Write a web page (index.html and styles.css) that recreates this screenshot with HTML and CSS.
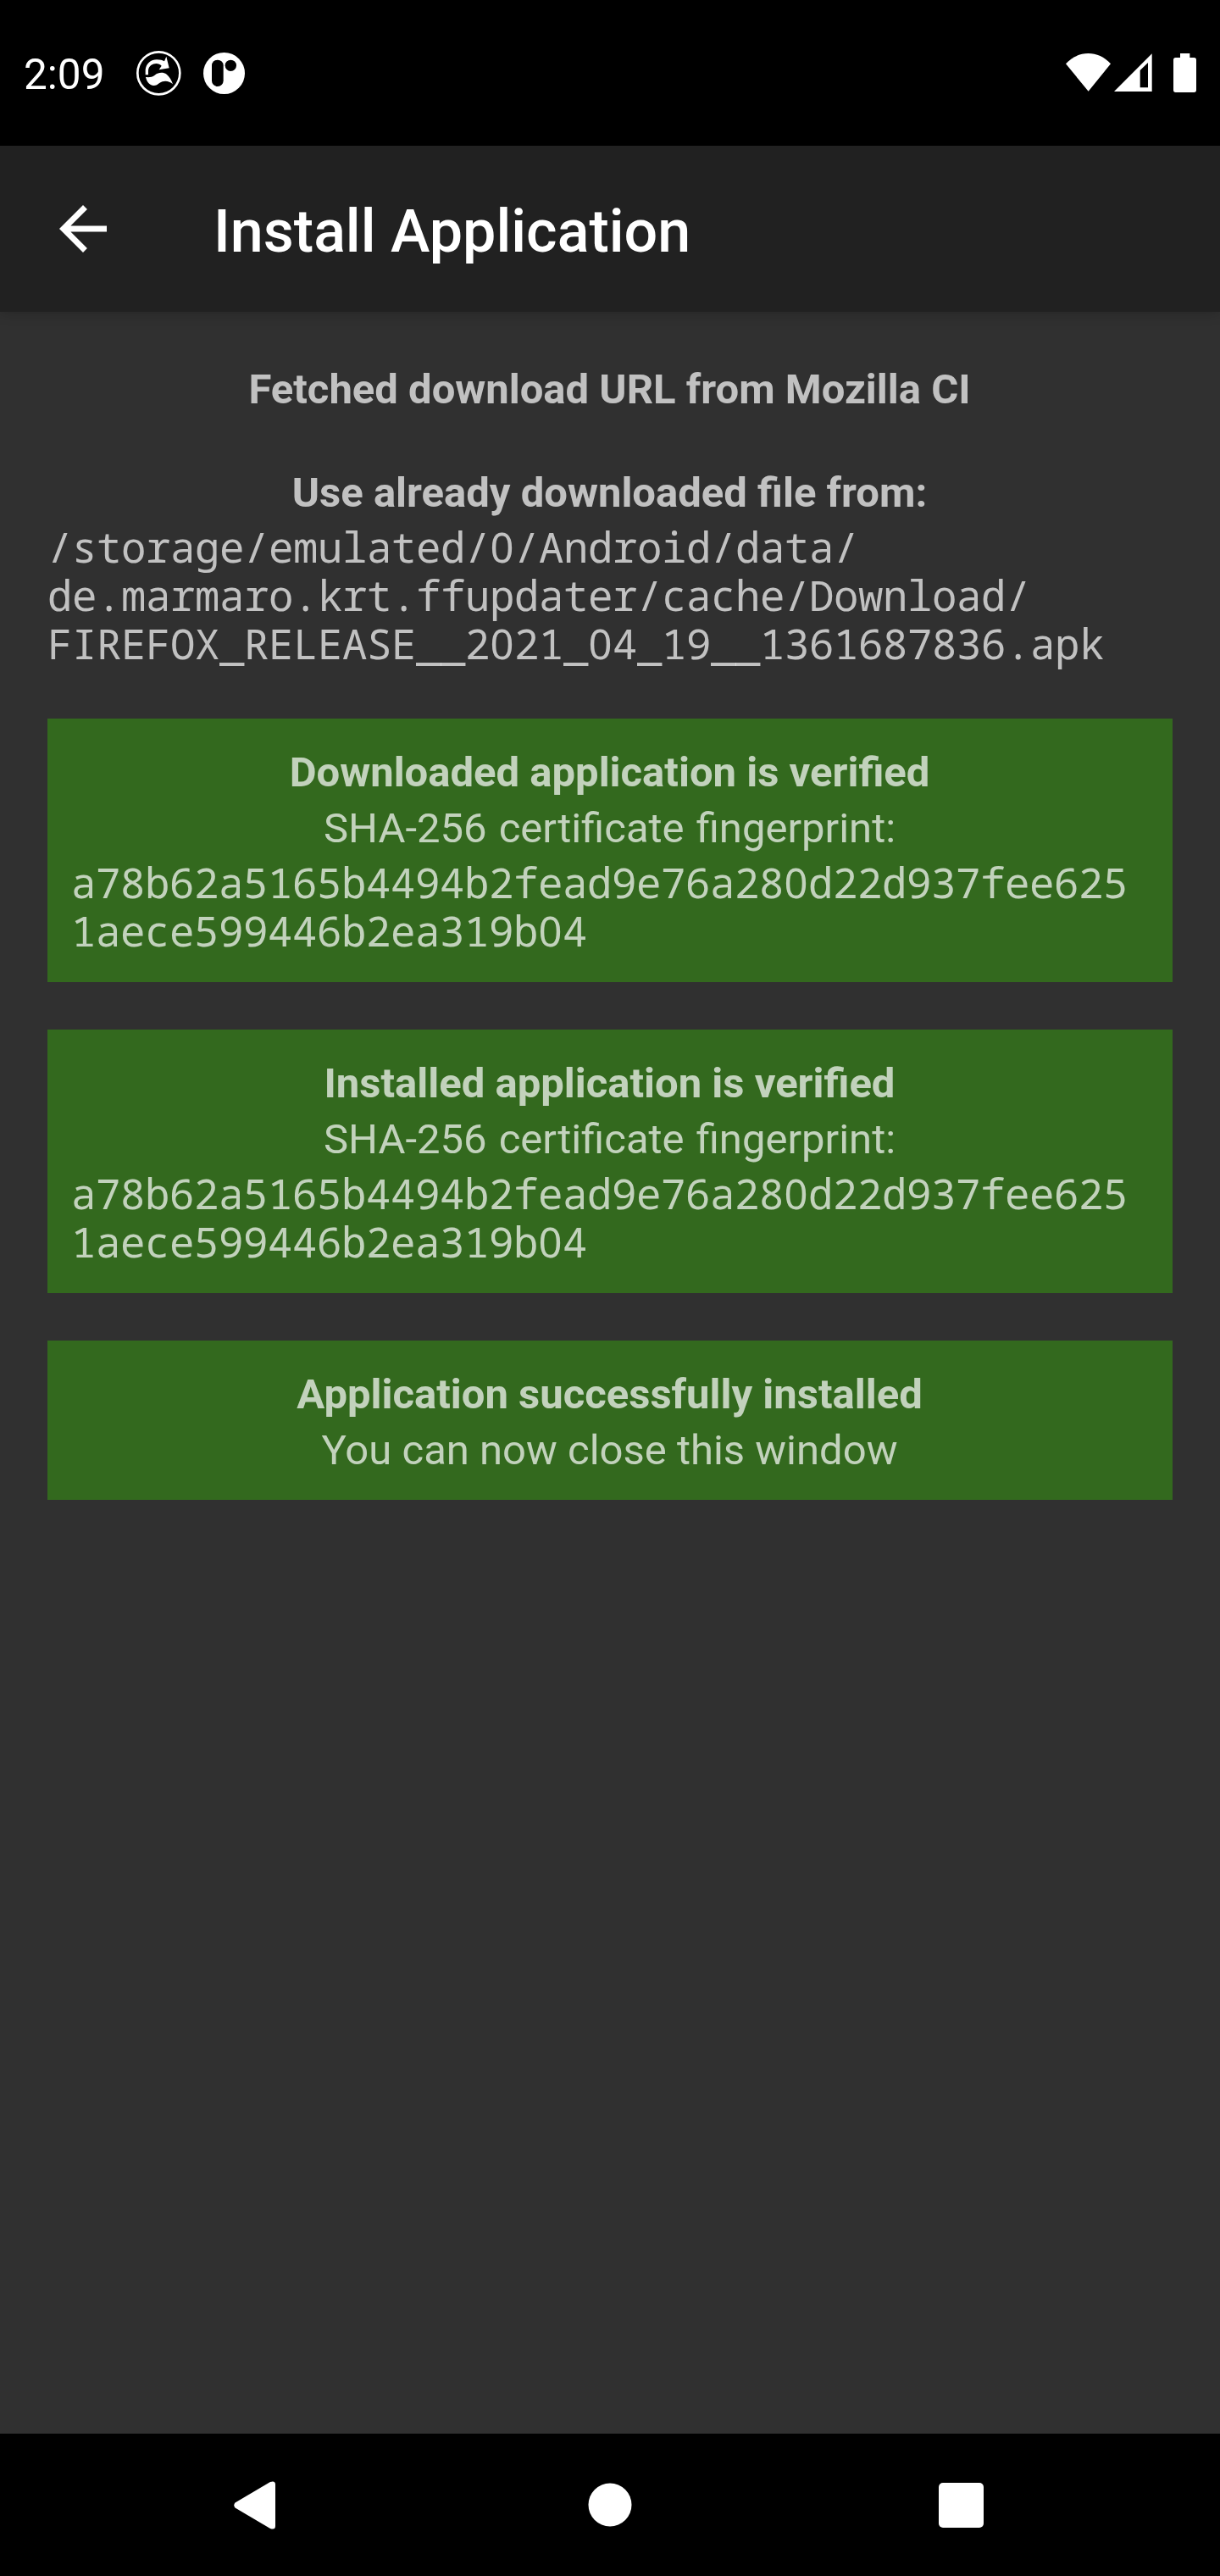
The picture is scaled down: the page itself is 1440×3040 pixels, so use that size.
FILE: index.html
```html
<!DOCTYPE html>
<html lang="en">
<head>
<meta charset="utf-8">
<title>Install Application</title>
<link rel="stylesheet" href="styles.css">
</head>
<body>
<div class="screen">
  <header class="status">
    <span class="clock">2:09</span>
    <svg class="icon-update" viewBox="480 57 162 162" width="54" height="54">
      <circle cx="562" cy="139" r="75" fill="none" stroke="#fff" stroke-width="8"/>
      <path d="M515 145V127C517 105 535 91 555 91C567 91 576 93 582 97L589 80L599 121L563 127L572 113C560 99 527 104 525 130V145Z" fill="#fff"/>
      <path d="M516 153C527 154 538 154 548 146C562 135 578 135 590 143C599 151 608 164 612 178C602 169 588 165 575 169C560 174 558 183 545 183C528 182 519 168 516 153Z" fill="#fff"/>
    </svg>
    <svg class="icon-app" viewBox="720 66 147 147" width="49" height="49">
      <circle cx="793.500" cy="139.500" r="73.500" fill="#fff"/>
      <rect x="750" y="92" width="41" height="94" rx="20"/>
      <circle cx="817" cy="112" r="20"/>
    </svg>
    <span class="spacer"></span>
    <svg class="icon-wifi" viewBox="84 69 159 135" width="53" height="45" fill="#fff">
      <path d="M84 106C128 57 199 57 243 106L164 203Z"/>
    </svg>
    <svg class="icon-signal" viewBox="256 69 135 135" width="45" height="45" fill="#fff" fill-rule="evenodd">
      <path d="M256 204L390 70V204ZM348 129V190H376V102Z"/>
    </svg>
    <svg class="icon-battery" viewBox="465 69 81 138" width="27" height="46" fill="#fff">
      <path d="M489 69H523V84H538Q546 84 546 92V199Q546 207 538 207H473Q465 207 465 199V92Q465 84 473 84H489Z"/>
    </svg>
  </header>
  <div class="appbar">
    <svg viewBox="0 0 24 24" width="84" height="84" fill="#fff"><path d="M20 11H7.830l5.590-5.590L12 4l-8 8 8 8 1.410-1.410L7.830 13H20v-2z"/></svg>
    <h1>Install Application</h1>
  </div>
  <main class="content">
    <section>
      <p class="line bold">Fetched download URL from Mozilla CI</p>
    </section>
    <section>
      <p class="line bold">Use already downloaded file from:</p>
      <p class="mono">/storage/emulated/<span class="zero">0</span>/Android/data/<br>de.marmaro.krt.ffupdater/cache/Download/<br>FIREFOX_RELEASE__2<span class="zero">0</span>21_<span class="zero">0</span>4_19__1361687836.apk</p>
    </section>
    <section class="card">
      <p class="line bold">Downloaded application is verified</p>
      <p class="line wide">SHA-256 certificate fingerprint:</p>
      <p class="mono">a78b62a5165b4494b2fead9e76a28<span class="zero">0</span>d22d937fee625<br>1aece599446b2ea319b<span class="zero">0</span>4</p>
    </section>
    <section class="card">
      <p class="line bold">Installed application is verified</p>
      <p class="line wide">SHA-256 certificate fingerprint:</p>
      <p class="mono">a78b62a5165b4494b2fead9e76a28<span class="zero">0</span>d22d937fee625<br>1aece599446b2ea319b<span class="zero">0</span>4</p>
    </section>
    <section class="card">
      <p class="line bold">Application successfully installed</p>
      <p class="line">You can now close this window</p>
    </section>
  </main>
  <nav class="navbar">
    <svg viewBox="0 0 49 57" width="49" height="57" fill="#fff"><path d="M1.500 25.500L43 1Q49 -1 49 4V53Q49 58 43 56L1.500 31.500Q-1 28.500 1.500 25.500Z"/></svg>
    <svg class="home" viewBox="0 0 52 52" width="52" height="52" fill="#fff"><circle cx="26" cy="26" r="25.500"/></svg>
    <svg viewBox="0 0 53 53" width="53" height="53" fill="#fff"><rect width="53" height="53" rx="5"/></svg>
  </nav>
</div>
</body>
</html>
```
FILE: styles.css
```css
* { box-sizing: border-box; margin: 0; }
body { background: #303030; font-family: Roboto, sans-serif; }
svg { display: block; flex: none; }
.screen { width: 1440px; height: 3040px; display: flex; flex-direction: column; }
.status { height: 172px; padding: 0 28px; display: flex; align-items: flex-start; background: #000; color: #fff; }
.clock { width: 132px; margin-top: 60px; font-size: 49.500px; line-height: 57px; }
.icon-update { margin-top: 59px; }
.icon-app { margin: 62px 0 0 26px; }
.spacer { flex: 1; }
.icon-wifi { margin-top: 63px; }
.icon-signal { margin: 63px 25px 0 4px; }
.icon-battery { margin-top: 63px; }
.appbar { height: 196px; padding: 0 56px; display: flex; align-items: center; gap: 112px; background: #212121; color: #fff; box-shadow: 0 2px 14px rgba(0, 0, 0, .2); }
.appbar h1 { padding-top: 6px; font-size: 70px; font-weight: 500; line-height: 82px; }
.content { flex: 1; padding: 56px; display: flex; flex-direction: column; gap: 56px; color: rgba(255, 255, 255, .7); }
.card { padding: 28px; background: #33691e; }
.line { padding: 6px 1px 0 0; font-size: 49px; line-height: 60px; text-align: center; }
.bold { font-weight: 700; }
.wide { word-spacing: 2px; }
.mono { padding: 5px 0 4px; font-family: "Noto Sans Mono", monospace; font-size: 49px; line-height: 57px; letter-spacing: -0.400px; white-space: nowrap; }
/* plain zero, without the slash, on the same 29px pitch */
.zero { padding: 0 0.500px; font-family: "Noto Sans", sans-serif; letter-spacing: 0; line-height: 0; }
.navbar { height: 168px; padding: 0 279px 0 276px; display: flex; align-items: center; justify-content: space-between; background: #000; }
.home { margin-left: 6.500px; }
```
